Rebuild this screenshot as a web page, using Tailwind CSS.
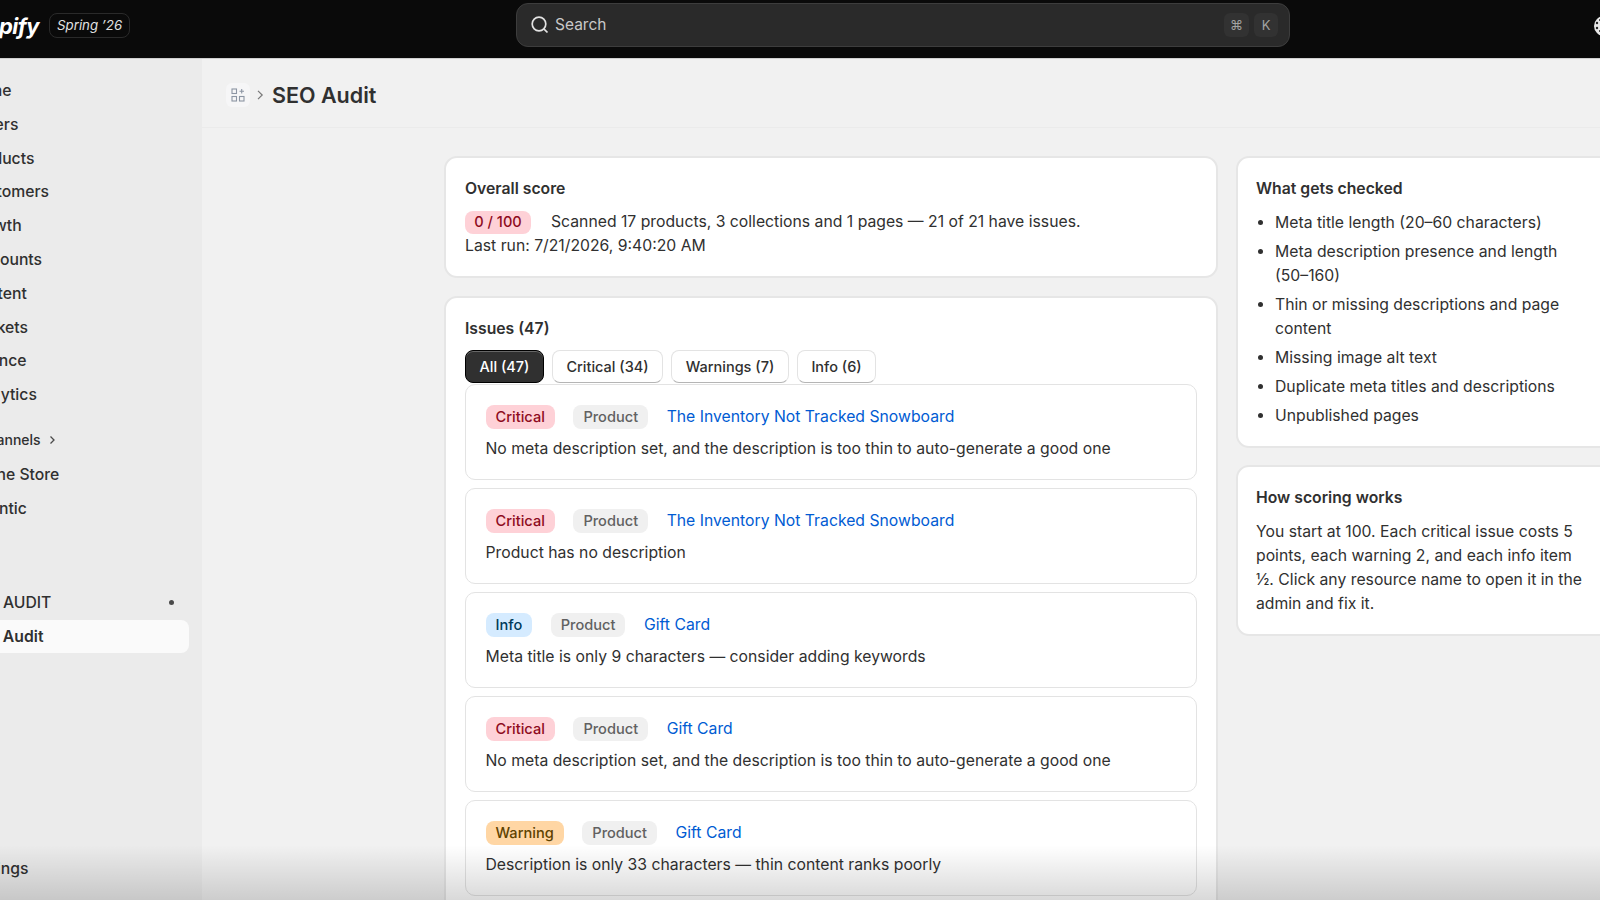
<!DOCTYPE html>
<html lang="en">
<head>
<meta charset="UTF-8">
<script src="https://cdn.jsdelivr.net/npm/@tailwindcss/browser@4"></script>
<title>SEO Audit</title>
</head>
<body class="relative w-[1600px] h-[900px] overflow-hidden bg-[#f1f1f1] font-['Inter',sans-serif] text-[15.75px] leading-[24px] text-[#303030]">
<header class="h-[59px] bg-[#0a0a0a] border-b border-[#d0d0d0] flex items-start relative">
    <div class="w-[516px] shrink-0 flex items-center h-[25px] mt-[13px] -ml-[41px]">
        <span class="text-white font-bold italic text-[22px] tracking-tight w-[90px]">Shopify</span>
        <span class="text-[#e3e3e3] italic text-[13.3px] leading-[23px] border border-[#2a2a2a] rounded-lg px-[7px]">Spring ’26</span>
    </div>
    <div class="absolute left-[516px] top-[3px] w-[774px] h-[44px] rounded-[12px] bg-[#2a2a2a] border border-[#3d3d3d] flex items-center pl-[13px] pr-[11px] gap-[5px] text-[#c8c8c8] text-[15.5px]">
        <svg class="w-[20px] h-[20px]" viewBox="0 0 20 20" fill="none" stroke="#e3e3e3" stroke-width="1.7"><circle cx="9" cy="9" r="6.8"/><path d="M13.8 13.8 17.5 17.5"/></svg>
        <span class="flex-1">Search</span>
        <span class="w-[25px] h-[24px] rounded-md bg-[#323232] text-[#a3a3a3] text-[13px] flex items-center justify-center">⌘</span>
        <span class="w-[24px] h-[24px] rounded-md bg-[#323232] text-[#a3a3a3] text-[13px] flex items-center justify-center">K</span>
    </div>
    <svg class="absolute left-[1594px] top-[16px] w-[20px] h-[20px]" viewBox="0 0 20 20"><circle cx="10" cy="10" r="10" fill="#e8e8e8"/><circle cx="3" cy="7" r="1.2" fill="#222"/><circle cx="3" cy="12" r="1.2" fill="#222"/><circle cx="6" cy="4" r="1" fill="#222"/><circle cx="6" cy="15" r="1" fill="#222"/></svg>
</header>
<div class="flex h-[841px]">
    <aside class="w-[202px] shrink-0 bg-[#ebebeb] flex flex-col pt-[15px] font-medium">
        <div class="h-[33.8px] leading-[33.8px] -ml-[33px]">Home</div>
        <div class="h-[33.8px] leading-[33.8px] -ml-[33px]">Orders</div>
        <div class="h-[33.8px] leading-[33.8px] -ml-[33px]">Products</div>
        <div class="h-[33.8px] leading-[33.8px] -ml-[33px]">Customers</div>
        <div class="h-[33.8px] leading-[33.8px] -ml-[33px]">Growth</div>
        <div class="h-[33.8px] leading-[33.8px] -ml-[33px]">Discounts</div>
        <div class="h-[33.8px] leading-[33.8px] -ml-[33px]">Content</div>
        <div class="h-[33.8px] leading-[33.8px] -ml-[33px]">Markets</div>
        <div class="h-[33.8px] leading-[33.8px] -ml-[33px]">Finance</div>
        <div class="h-[33.8px] leading-[33.8px] -ml-[33px]">Analytics</div>
        <div class="h-[33.8px] mt-[11.5px] flex items-center gap-[5px] text-[14px] -ml-[60px]">
            <span>Sales channels</span>
            <svg class="w-[12px] h-[12px]" viewBox="0 0 12 12" fill="none" stroke="#4a4a4a" stroke-width="1.3"><path d="M4.5 2.5 8 6l-3.5 3.5"/></svg>
        </div>
        <div class="h-[33.8px] mt-[1px] leading-[33.8px] -ml-[33px]">Online Store</div>
        <div class="h-[33.8px] leading-[33.8px] -ml-[1px]">ntic</div>
        <div class="h-[33.8px] mt-[60px] flex items-center justify-between pr-[28px] -ml-[33px]">
            <span>SEO AUDIT</span>
            <span class="w-[5px] h-[5px] rounded-full bg-[#4a4a4a]"></span>
        </div>
        <div class="h-[33.8px] leading-[33.8px] w-[189px] bg-[#fafafa] rounded-r-lg font-semibold overflow-hidden">
            <span class="block -ml-[33px]">SEO Audit</span>
        </div>
        <div class="mt-auto h-[34px] leading-[34px] mb-[14px] -ml-[33px]">Settings</div>
    </aside>
    <main class="flex-1 min-w-0">
        <div class="h-[69px] border-b border-[#ebebeb] flex items-center pl-[24px] pt-[3px]">
            <span class="w-[24px] h-[24px] rounded-md bg-[#f6f6f7] flex items-center justify-center">
                <svg class="w-[14px] h-[14px]" viewBox="0 0 14 14" fill="none" stroke="#8c95a3" stroke-width="1.1"><rect x="1" y="1" width="4.5" height="4.5"/><rect x="1" y="8.5" width="4.5" height="4.5"/><rect x="8.5" y="8.5" width="4.5" height="4.5"/><path d="M10.7 1v4.5M8.5 3.2H13"/></svg>
            </span>
            <svg class="w-[12px] h-[12px] ml-[4px] mr-[6px]" viewBox="0 0 12 12" fill="none" stroke="#777" stroke-width="1.2"><path d="M4 1.8 8.2 6 4 10.2"/></svg>
            <h1 class="text-[21.5px] font-semibold text-[#303030]">SEO Audit</h1>
        </div>
        <div class="flex items-start gap-[17.5px] pl-[242px] pt-[28px] w-[1398px]">
            <div class="w-[774px] shrink-0 flex flex-col gap-[18px]">
                <section class="bg-white border-[2px] border-[#e6e6e6] rounded-[13px] px-[19px] pt-[18.5px] h-[122px]">
                    <h2 class="font-semibold">Overall score</h2>
                    <div class="mt-[9.5px]">
                        <span class="inline-block w-[66px] text-center h-[23px] leading-[23px] rounded-lg bg-[#fed1d7] text-[#8e0b21] text-[14.6px] font-medium mr-[20px]">0 / 100</span>Scanned 17 products, 3 collections and 1 pages — 21 of 21 have issues.
                    </div>
                    <div>Last run: 7/21/2026, 9:40:20 AM</div>
                </section>
                <section class="bg-white border-[2px] border-[#e6e6e6] rounded-[13px] px-[19px] pt-[18.5px] pb-[20px]">
                    <h2 class="font-semibold">Issues (47)</h2>
                    <div class="flex gap-[8px] mt-[9px] text-[14.5px] font-medium relative z-10">
                        <span class="h-[33px] leading-[31px] w-[79px] text-center rounded-lg bg-[#303030] border border-black text-white shadow-[inset_0_1px_0_#666]">All (47)</span>
                        <span class="h-[33px] leading-[31px] w-[111px] text-center rounded-lg bg-white border border-[#e3e3e3] border-b-[#b5b5b5]">Critical (34)</span>
                        <span class="h-[33px] leading-[31px] w-[118px] text-center rounded-lg bg-white border border-[#e3e3e3] border-b-[#b5b5b5]">Warnings (7)</span>
                        <span class="h-[33px] leading-[31px] w-[79px] text-center rounded-lg bg-white border border-[#e3e3e3] border-b-[#b5b5b5]">Info (6)</span>
                    </div>
                    <div class="flex flex-col gap-[8px] mt-[1px]">
                        <div class="h-[96px] border border-[#e3e3e3] rounded-[10px] pl-[19.5px] pr-[20px] pt-[20.5px]">
                            <div class="flex items-center gap-[18.5px] h-[24px]">
                                <span class="h-[24px] leading-[24px] rounded-lg bg-[#fed1d7] text-[#8e0b21] text-[14.6px] font-medium px-[10px]">Critical</span>
                                <span class="h-[24px] leading-[24px] rounded-lg bg-[#f0f0f0] text-[#616161] text-[14.6px] font-medium px-[10px]">Product</span>
                                <a class="text-[#005bd3]">The Inventory Not Tracked Snowboard</a>
                            </div>
                            <p class="mt-[8px]">No meta description set, and the description is too thin to auto-generate a good one</p>
                        </div>
                        <div class="h-[96px] border border-[#e3e3e3] rounded-[10px] pl-[19.5px] pr-[20px] pt-[20.5px]">
                            <div class="flex items-center gap-[18.5px] h-[24px]">
                                <span class="h-[24px] leading-[24px] rounded-lg bg-[#fed1d7] text-[#8e0b21] text-[14.6px] font-medium px-[10px]">Critical</span>
                                <span class="h-[24px] leading-[24px] rounded-lg bg-[#f0f0f0] text-[#616161] text-[14.6px] font-medium px-[10px]">Product</span>
                                <a class="text-[#005bd3]">The Inventory Not Tracked Snowboard</a>
                            </div>
                            <p class="mt-[8px]">Product has no description</p>
                        </div>
                        <div class="h-[96px] border border-[#e3e3e3] rounded-[10px] pl-[19.5px] pr-[20px] pt-[20.5px]">
                            <div class="flex items-center gap-[18.5px] h-[24px]">
                                <span class="h-[24px] leading-[24px] rounded-lg bg-[#d5ebff] text-[#003a5a] text-[14.6px] font-medium px-[10px]">Info</span>
                                <span class="h-[24px] leading-[24px] rounded-lg bg-[#f0f0f0] text-[#616161] text-[14.6px] font-medium px-[10px]">Product</span>
                                <a class="text-[#005bd3]">Gift Card</a>
                            </div>
                            <p class="mt-[8px]">Meta title is only 9 characters — consider adding keywords</p>
                        </div>
                        <div class="h-[96px] border border-[#e3e3e3] rounded-[10px] pl-[19.5px] pr-[20px] pt-[20.5px]">
                            <div class="flex items-center gap-[18.5px] h-[24px]">
                                <span class="h-[24px] leading-[24px] rounded-lg bg-[#fed1d7] text-[#8e0b21] text-[14.6px] font-medium px-[10px]">Critical</span>
                                <span class="h-[24px] leading-[24px] rounded-lg bg-[#f0f0f0] text-[#616161] text-[14.6px] font-medium px-[10px]">Product</span>
                                <a class="text-[#005bd3]">Gift Card</a>
                            </div>
                            <p class="mt-[8px]">No meta description set, and the description is too thin to auto-generate a good one</p>
                        </div>
                        <div class="h-[96px] border border-[#e3e3e3] rounded-[10px] pl-[19.5px] pr-[20px] pt-[20.5px]">
                            <div class="flex items-center gap-[18.5px] h-[24px]">
                                <span class="h-[24px] leading-[24px] rounded-lg bg-[#ffd6a4] text-[#5e4200] text-[14.6px] font-medium px-[10px]">Warning</span>
                                <span class="h-[24px] leading-[24px] rounded-lg bg-[#f0f0f0] text-[#616161] text-[14.6px] font-medium px-[10px]">Product</span>
                                <a class="text-[#005bd3]">Gift Card</a>
                            </div>
                            <p class="mt-[8px]">Description is only 33 characters — thin content ranks poorly</p>
                        </div>
                    </div>
                </section>
            </div>
            <div class="w-[384px] shrink-0 flex flex-col gap-[17px]">
                <section class="bg-white border-[2px] border-[#e6e6e6] rounded-[13px] px-[18.5px] pt-[19px] h-[292px]">
                    <h2 class="font-semibold">What gets checked</h2>
                    <ul class="mt-[9.5px] list-disc pl-[19px] flex flex-col gap-[5px]">
                        <li>Meta title length (20–60 characters)</li>
                        <li>Meta description presence and <span class="whitespace-nowrap">length</span> <span class="whitespace-nowrap">(50–160)</span></li>
                        <li>Thin or missing descriptions and page content</li>
                        <li>Missing image alt text</li>
                        <li>Duplicate meta titles and descriptions</li>
                        <li>Unpublished pages</li>
                    </ul>
                </section>
                <section class="bg-white border-[2px] border-[#e6e6e6] rounded-[13px] px-[18.5px] pt-[19px] h-[171px]">
                    <h2 class="font-semibold">How scoring works</h2>
                    <p class="mt-[10px] w-[334px]">You start at 100. Each critical issue costs 5 points, each warning 2, and each info item ½. Click any resource name to open it in the admin and fix it.</p>
                </section>
            </div>
        </div>
    </main>
</div>
<div class="absolute left-0 right-0 bottom-0 h-[55px] bg-gradient-to-b from-black/0 to-black/15 pointer-events-none"></div>
</body>
</html>
